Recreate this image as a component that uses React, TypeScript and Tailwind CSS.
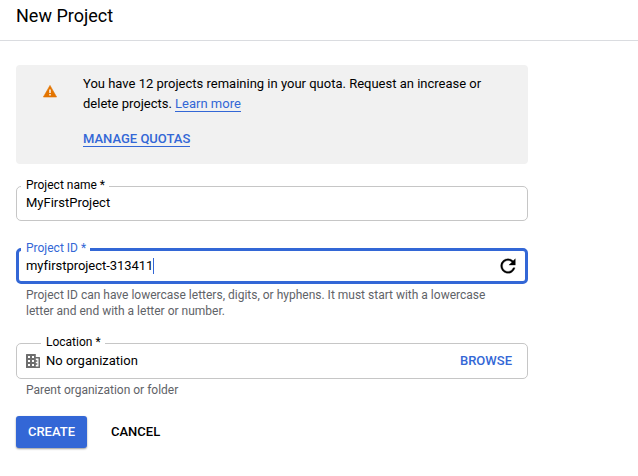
import type { ReactNode } from "react";

function WarningIcon() {
  return (
    <svg className="block h-4 w-4" viewBox="0 0 16 16">
      <path d="M8 2.4L14.6 14H1.4z" fill="#e37400" stroke="#e37400" strokeWidth="0.6" strokeLinejoin="round" />
      <path d="M7.3 6.6h1.4v3.4H7.3zM7.3 11h1.4v1.4H7.3z" fill="#fff" />
    </svg>
  );
}

function RefreshIcon() {
  return (
    <svg className="block h-[22px] w-[22px]" viewBox="0 0 24 24" fill="#000" stroke="#000" strokeWidth="0.3">
      <path d="M17.65 6.35A7.958 7.958 0 0 0 12 4a8 8 0 1 0 7.73 10h-2.08A5.99 5.99 0 0 1 12 18c-3.31 0-6-2.69-6-6s2.69-6 6-6c1.66 0 3.14.69 4.22 1.78L13 11h7V4l-2.35 2.35z" />
    </svg>
  );
}

function OrganizationIcon() {
  return (
    <svg className="block h-[14px] w-[14px]" viewBox="0 0 14 14" fill="#6e6e6e">
      <path
        fillRule="evenodd"
        d="M.6 0h9.2v3h3.6q.6 0 .6.6v9.8q0 .6-.6.6H.6q-.6 0-.6-.6V.6Q0 0 .6 0zM2 2v2h2V2zM6 2v2h2V2zM2 6v2h2V6zM6 6v2h2V6zM2 10v2h2v-2zM6 10v2h2v-2zM9.8 4.5v1.7h1.5v1.6H9.8v1.4h1.5v1.6H9.8v1.7h2.7v-8z"
      />
    </svg>
  );
}

function Field({ label, labelClass, boxClass, children }: { label: string; labelClass: string; boxClass: string; children: ReactNode }) {
  return (
    <div className={"relative flex items-center rounded-[5px] " + boxClass}>
      <span className={"absolute h-4 whitespace-nowrap bg-white pl-[5px] text-[12px] leading-4 " + labelClass}>{label}</span>
      {children}
    </div>
  );
}

export default function App() {
  return (
    <div className="h-[476px] w-[638px] overflow-hidden bg-white font-[Roboto,sans-serif] text-[13px] text-black">
      <header className="h-[41px] border-b border-[#dadce0] pl-4 pt-1">
        <h1 className="text-[18px] leading-6">New Project</h1>
      </header>
      <main className="ml-4 mt-6 w-[512px]">
        <section className="flex h-[99px] rounded-[4px] bg-[#f1f1f1] pl-[26px] pt-[9px]">
          <div className="mt-[9px] w-[41px]">
            <WarningIcon />
          </div>
          <div className="whitespace-nowrap leading-5">
            <p>You have 12 projects remaining in your quota. Request an increase or</p>
            <p>
              delete projects. <a className="inline-block h-[18px] border-b border-[#3367d6] leading-[20px] text-[#3367d6]">Learn more</a>
            </p>
            <p className="mt-[15px]">
              <a className="inline-block h-[18px] border-b border-[#3367d6] font-medium leading-[20px] text-[#3367d6]">MANAGE QUOTAS</a>
            </p>
          </div>
        </section>

        <div className="mt-[22px]">
          <Field label="Project name *" labelClass="left-1 -top-[10px] w-[88px]" boxClass="h-[35px] border border-[#c6c6c6] pb-0.5 pl-[9px]">
            <span className="leading-4">MyFirstProject</span>
          </Field>
        </div>

        <div className="mt-[27px]">
          <Field label="Project ID *" labelClass="left-[2px] -top-[11px] w-[69px] text-[#3367d6]" boxClass="h-[36px] border-3 border-[#3367d6] pl-[7px]">
            <span className="border-r border-[#3367d6] leading-4 tracking-[-0.04px]">myfirstproject-313411</span>
            <span className="ml-auto mr-[6px]">
              <RefreshIcon />
            </span>
          </Field>
          <p className="mt-[3px] whitespace-nowrap pl-[10px] text-[12px] leading-4 text-[#5f6368]">
            Project ID can have lowercase letters, digits, or hyphens. It must start with a lowercase
            <br />
            letter and end with a letter or number.
          </p>
        </div>

        <div className="mt-[24px]">
          <Field label="Location *" labelClass="left-6 -top-[10px] w-[64px]" boxClass="h-[36px] border border-[#c6c6c6] pl-[9px]">
            <OrganizationIcon />
            <span className="ml-[6px] leading-4">No organization</span>
            <button className="ml-auto mr-[15px] font-medium leading-4 text-[#3367d6]">BROWSE</button>
          </Field>
          <p className="mt-[3px] pl-[10px] text-[12px] leading-4 text-[#5f6368]">Parent organization or folder</p>
        </div>

        <div className="mt-[18px] flex items-center">
          <button className="h-8 w-[71px] rounded-[3px] bg-[#3367d6] text-[13px] font-medium text-white shadow-[0_1px_2px_rgba(0,0,0,0.4)]">CREATE</button>
          <button className="ml-6 text-[13px] font-medium">CANCEL</button>
        </div>
      </main>
    </div>
  );
}
